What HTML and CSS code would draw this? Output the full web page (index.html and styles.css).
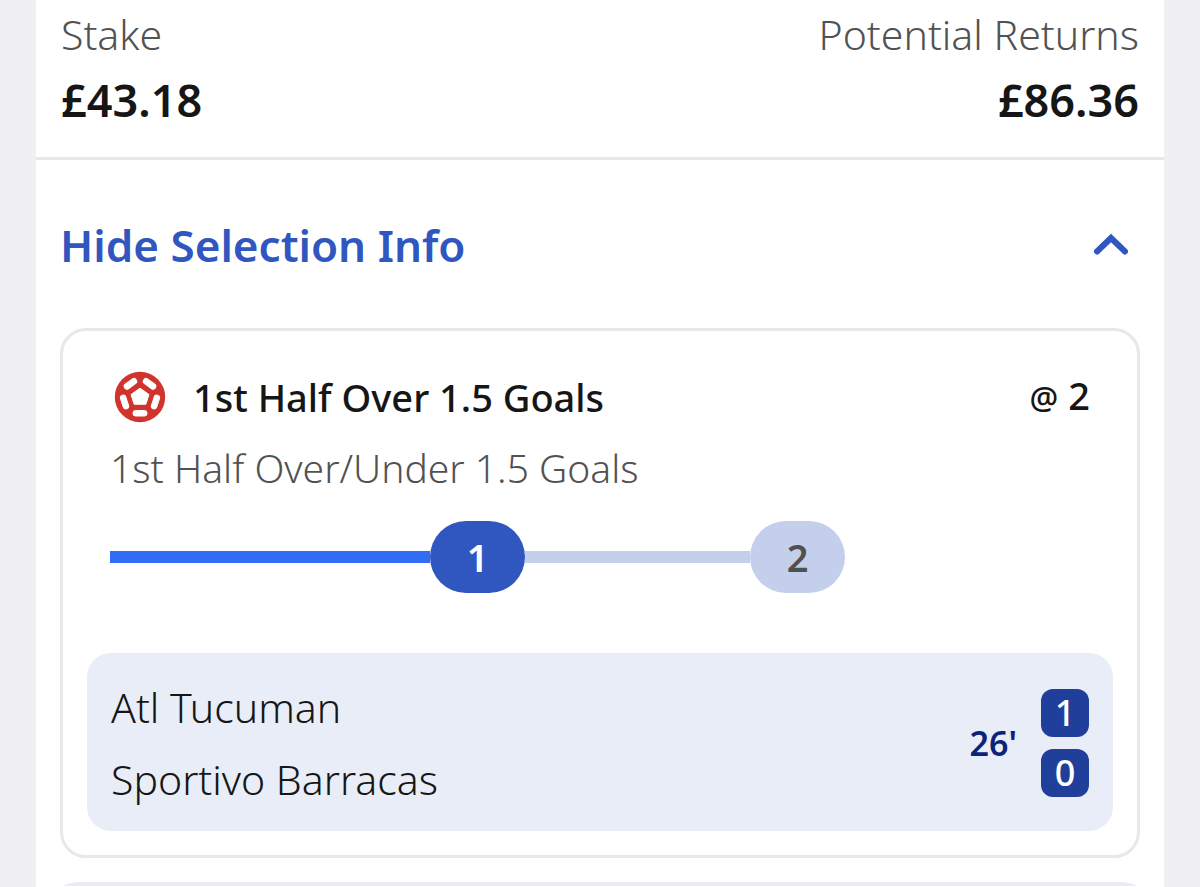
FILE: index.html
```html
<!DOCTYPE html>
<html lang="en">
<head>
<meta charset="utf-8">
<meta name="viewport" content="width=device-width, initial-scale=1">
<title>Bet details</title>
<link rel="stylesheet" href="styles.css">
</head>
<body>
<main class="slip">
  <dl class="totals">
    <div class="total">
      <dt class="total-label">Stake</dt>
      <dd class="total-value">£43.18</dd>
    </div>
    <div class="total total-end">
      <dt class="total-label">Potential Returns</dt>
      <dd class="total-value">£86.36</dd>
    </div>
  </dl>
  <button class="toggle" type="button" aria-expanded="true" aria-controls="selection">
    <span>Hide Selection Info</span>
    <svg class="chevron" viewBox="0 0 36 24" aria-hidden="true"><path d="M4 18.500 18 5 32 18.500"/></svg>
  </button>
  <section class="card" id="selection">
    <div class="selection">
      <header class="heading">
        <svg class="ball" viewBox="-26 -26 52 52" aria-hidden="true">
          <circle class="ball-base" r="25.200"/>
          <path class="ball-panel" d="M0-8.800 9-2.500 5.800 7.300H-5.800L-9-2.500Z"/>
          <rect class="ball-panel" x="-7" y="13.500" width="14" height="5.500" rx="2.500"/>
          <rect class="ball-panel" x="-7" y="13.500" width="14" height="5.500" rx="2.500" transform="rotate(72)"/>
          <rect class="ball-panel" x="-7" y="13.500" width="14" height="5.500" rx="2.500" transform="rotate(144)"/>
          <rect class="ball-panel" x="-7" y="13.500" width="14" height="5.500" rx="2.500" transform="rotate(216)"/>
          <rect class="ball-panel" x="-7" y="13.500" width="14" height="5.500" rx="2.500" transform="rotate(288)"/>
        </svg>
        <h2 class="title">1st Half Over 1.5 Goals</h2>
        <span class="odds"><span class="at">@</span> 2</span>
      </header>
      <p class="market">1st Half Over/Under 1.5 Goals</p>
      <div class="progress">
        <span class="track track-done"></span>
        <span class="step step-done">1</span>
        <span class="track track-next"></span>
        <span class="step step-next">2</span>
      </div>
    </div>
    <div class="match">
      <div class="teams">
        <span>Atl Tucuman</span>
        <span>Sportivo Barracas</span>
      </div>
      <span class="clock">26'</span>
      <div class="scores">
        <span class="score">1</span>
        <span class="score">0</span>
      </div>
    </div>
  </section>
  <section class="next-card"></section>
</main>
</body>
</html>
```
FILE: styles.css
```css
* { box-sizing: border-box; }
body {
  margin: 0;
  background: #f0f0f3;
  color: #161616;
  font-family: "Noto Sans", sans-serif;
  font-size: 39px;
  font-weight: 300;
  line-height: 52px;
}
.slip {
  min-height: 100vh;
  margin: 0 36px;
  background: #fff;
}
.totals {
  display: flex;
  justify-content: space-between;
  margin: 0;
  padding: 8px 25px 29px;
  border-bottom: 3px solid #e8e8ea;
}
.total { display: flex; flex-direction: column; gap: 12px; }
.total-end { text-align: right; }
.total-label { color: #525252; font-size: 41px; }
.total-value {
  margin: 0;
  font-size: 45px;
  font-weight: 600;
  line-height: 56px;
}
.toggle {
  display: flex;
  align-items: center;
  justify-content: space-between;
  width: 100%;
  padding: 56px 35px 54px 24px;
  border: 0;
  background: none;
  color: #3057bf;
  font: inherit;
  font-size: 44px;
  font-weight: 600;
  line-height: 58px;
  text-align: left;
  cursor: pointer;
}
.chevron { width: 36px; height: 24px; }
.chevron path {
  fill: none;
  stroke: currentColor;
  stroke-width: 6;
  stroke-linecap: round;
}
.card {
  margin: 0 24px;
  padding: 38px 24px 24px;
  border: 3px solid #e8e8e9;
  border-radius: 26px;
}
.selection { padding: 0 23px; }
.heading { display: flex; align-items: center; }
.ball { width: 52px; height: 52px; margin: 0 27px 0 4px; }
.ball-base { fill: #d0342c; }
.ball-panel { fill: #fff; stroke: #fff; stroke-linejoin: round; }
.title { margin: 0; font-size: 38px; font-weight: 500; }
.odds { margin-left: auto; font-size: 38px; font-weight: 500; }
.at { font-size: 32px; }
.market { margin: 18px 0 27px; color: #525252; }
.progress { display: flex; align-items: center; width: 75%; }
.track { height: 12px; }
.track-done { flex: 320; background: #316cf4; }
.track-next { flex: 225; background: #c4cfeb; }
.step {
  width: 95px;
  border-radius: 36px;
  font-size: 38px;
  font-weight: 600;
  line-height: 72px;
  text-align: center;
}
.step-done { background: #3057bf; color: #fff; }
.step-next { background: #c4cfeb; color: #505050; }
.match {
  display: flex;
  align-items: center;
  margin-top: 60px;
  padding: 28px 24px 26px;
  border-radius: 24px;
  background: #e9edf8;
}
.teams {
  display: flex;
  flex: 1;
  flex-direction: column;
  gap: 20px;
  font-size: 41px;
}
.clock {
  margin-right: 24px;
  color: #0d2279;
  font-size: 34px;
  font-weight: 600;
}
.scores { display: flex; flex-direction: column; gap: 12px; }
.score {
  width: 48px;
  border-radius: 12px;
  background: #1f3f9b;
  color: #fff;
  font-size: 36px;
  font-weight: 500;
  line-height: 48px;
  text-align: center;
}
.next-card {
  height: 4px;
  margin: 24px 28px 0;
  border-radius: 20px 20px 0 0 / 4px 4px 0 0;
  background: #e9ecf7;
}
```
